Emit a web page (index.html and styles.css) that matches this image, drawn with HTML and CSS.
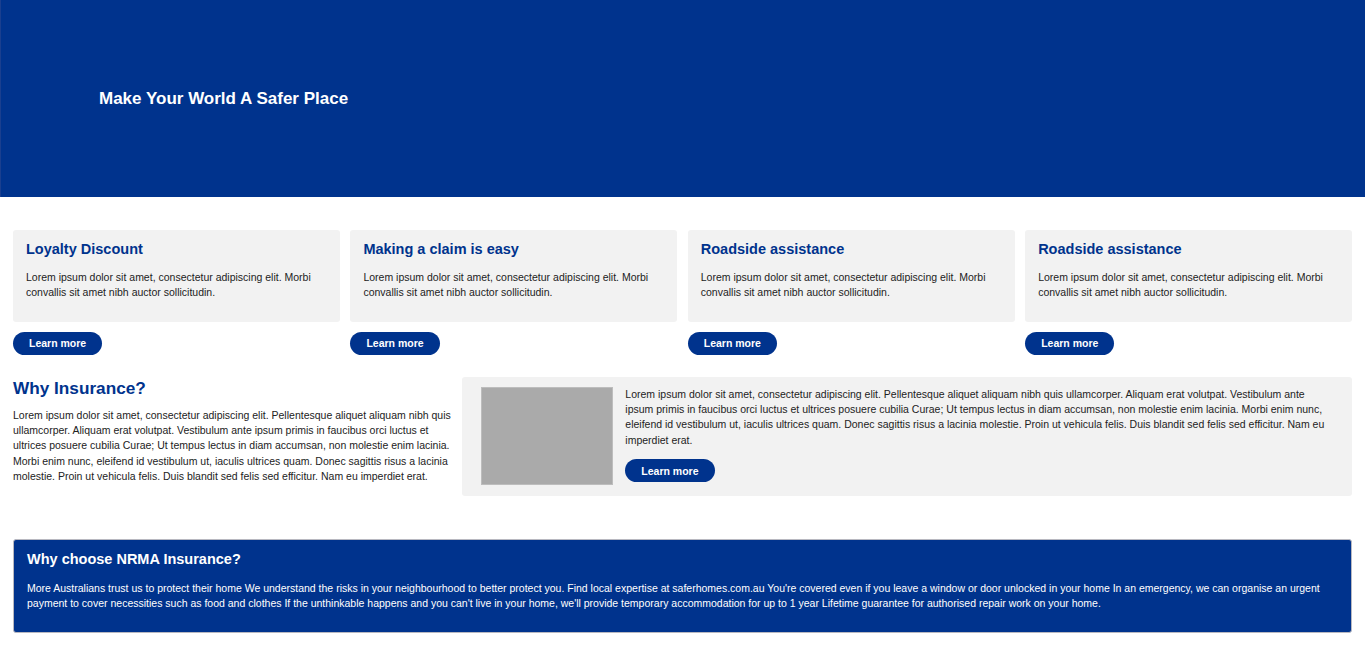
FILE: index.html
```html
<!DOCTYPE html>
<html lang="en">
<head>
<meta charset="utf-8">
<title>NRMA Insurance</title>
<link rel="stylesheet" href="styles.css">
</head>
<body>
<header class="hero">
  <h1 class="hero-title">Make Your World A Safer Place</h1>
</header>
<main class="content">
  <section class="cards">
    <div class="card-col">
      <div class="card">
        <h3 class="card-title">Loyalty Discount</h3>
        <p class="card-text">Lorem ipsum dolor sit amet, consectetur adipiscing elit. Morbi convallis sit amet nibh auctor sollicitudin.</p>
      </div>
      <a class="btn" href="#">Learn more</a>
    </div>
    <div class="card-col">
      <div class="card">
        <h3 class="card-title">Making a claim is easy</h3>
        <p class="card-text">Lorem ipsum dolor sit amet, consectetur adipiscing elit. Morbi convallis sit amet nibh auctor sollicitudin.</p>
      </div>
      <a class="btn" href="#">Learn more</a>
    </div>
    <div class="card-col">
      <div class="card">
        <h3 class="card-title">Roadside assistance</h3>
        <p class="card-text">Lorem ipsum dolor sit amet, consectetur adipiscing elit. Morbi convallis sit amet nibh auctor sollicitudin.</p>
      </div>
      <a class="btn" href="#">Learn more</a>
    </div>
    <div class="card-col">
      <div class="card">
        <h3 class="card-title">Roadside assistance</h3>
        <p class="card-text">Lorem ipsum dolor sit amet, consectetur adipiscing elit. Morbi convallis sit amet nibh auctor sollicitudin.</p>
      </div>
      <a class="btn" href="#">Learn more</a>
    </div>
  </section>

  <section class="why">
    <div class="why-left">
      <h2 class="why-title">Why Insurance?</h2>
      <p class="why-text">Lorem ipsum dolor sit amet, consectetur adipiscing elit. Pellentesque aliquet aliquam nibh quis ullamcorper. Aliquam erat volutpat. Vestibulum ante ipsum primis in faucibus orci luctus et ultrices posuere cubilia Curae; Ut tempus lectus in diam accumsan, non molestie enim lacinia. Morbi enim nunc, eleifend id vestibulum ut, iaculis ultrices quam. Donec sagittis risus a lacinia molestie. Proin ut vehicula felis. Duis blandit sed felis sed efficitur. Nam eu imperdiet erat.</p>
    </div>
    <div class="feature">
      <div class="feature-img"></div>
      <div class="feature-body">
        <p class="feature-text">Lorem ipsum dolor sit amet, consectetur adipiscing elit. Pellentesque aliquet aliquam nibh quis ullamcorper. Aliquam erat volutpat. Vestibulum ante ipsum primis in faucibus orci luctus et ultrices posuere cubilia Curae; Ut tempus lectus in diam accumsan, non molestie enim lacinia. Morbi enim nunc, eleifend id vestibulum ut, iaculis ultrices quam. Donec sagittis risus a lacinia molestie. Proin ut vehicula felis. Duis blandit sed felis sed efficitur. Nam eu imperdiet erat.</p>
        <a class="btn" href="#">Learn more</a>
      </div>
    </div>
  </section>

  <section class="choose">
    <h2 class="choose-title">Why choose NRMA Insurance?</h2>
    <p class="choose-text">More Australians trust us to protect their home We understand the risks in your neighbourhood to better protect you. Find local expertise at saferhomes.com.au You're covered even if you leave a window or door unlocked in your home In an emergency, we can organise an urgent payment to cover necessities such as food and clothes If the unthinkable happens and you can't live in your home, we'll provide temporary accommodation for up to 1 year Lifetime guarantee for authorised repair work on your home.</p>
  </section>
</main>
</body>
</html>
```

FILE: styles.css
```css
* { box-sizing: border-box; }

body {
  margin: 0;
  font-family: "Liberation Sans", Arial, sans-serif;
  color: #222;
  background: #fff;
}

.hero {
  height: 197px;
  background: #00338d;
  border-left: 1px solid #1a3f8f;
  display: flex;
  align-items: center;
  padding-left: 98px;
}

.hero-title {
  margin: 0;
  color: #fff;
  font-size: 17px;
  font-weight: bold;
}

.content {
  padding: 33px 13px 40px;
}

.cards {
  display: grid;
  grid-template-columns: repeat(4, 1fr);
  gap: 10.5px;
}

.card-col {
  display: flex;
  flex-direction: column;
  align-items: flex-start;
}

.card {
  align-self: stretch;
  background: #f2f2f2;
  border-radius: 3px;
  padding: 10px 13px 21px;
  margin-bottom: 10px;
}

.card-title {
  margin: 0 0 11px;
  font-size: 14.5px;
  line-height: 19px;
  color: #00338d;
}

.card-text {
  margin: 0;
  font-size: 10.5px;
  line-height: 15.4px;
  color: #222;
}

.btn {
  display: inline-flex;
  align-items: center;
  height: 23px;
  padding: 0 16px;
  border-radius: 12px;
  background: #00338d;
  color: #fff;
  font-size: 10.5px;
  font-weight: bold;
  text-decoration: none;
}

.why {
  display: grid;
  grid-template-columns: 439fr 889fr;
  gap: 10px;
  margin-top: 22px;
  align-items: start;
}

.why-title {
  margin: 0 0 9px;
  font-size: 17.2px;
  line-height: 22px;
  color: #00338d;
}

.why-text {
  margin: 0;
  font-size: 10.5px;
  line-height: 15.3px;
  color: #222;
}

.feature {
  display: flex;
  gap: 12px;
  background: #f2f2f2;
  border-radius: 3px;
  padding: 10px 19px 11px;
}

.feature-img {
  flex: 0 0 132px;
  height: 98px;
  background: #aaaaaa;
  border: 1px solid #bdbdbd;
}

.feature-body {
  flex: 1;
  display: flex;
  flex-direction: column;
  align-items: flex-start;
}

.feature-text {
  margin: 0 0 11px;
  font-size: 10.5px;
  line-height: 15.3px;
  color: #222;
}

.choose {
  margin-top: 43px;
  background: #00338d;
  border: 1px solid #b8b8c0;
  border-radius: 3px;
  padding: 10px 13px 21px;
  color: #fff;
}

.choose-title {
  margin: 0 0 12px;
  font-size: 14.5px;
  line-height: 19px;
  color: #fff;
}

.choose-text {
  margin: 0;
  font-size: 10.5px;
  line-height: 15px;
  color: #fff;
}
```
